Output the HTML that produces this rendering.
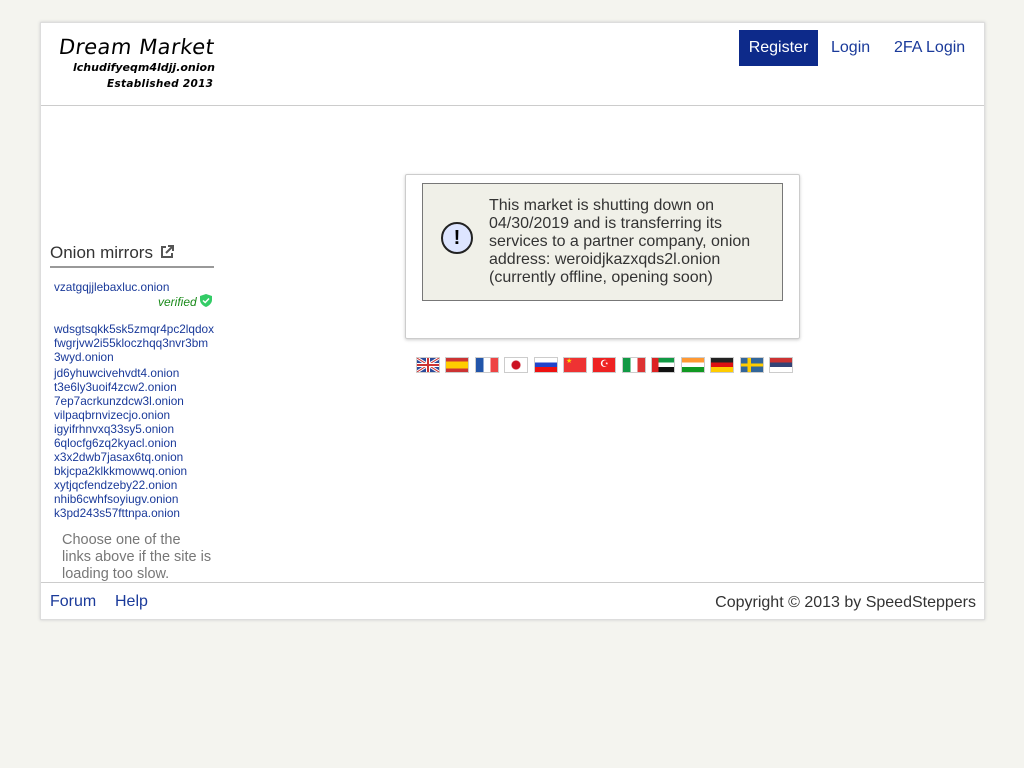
<!DOCTYPE html>
<html><head><meta charset="utf-8"><style>
*{margin:0;padding:0;box-sizing:border-box}
body{width:1024px;height:768px;background:#f4f4ef;font-family:"Liberation Sans",sans-serif;position:relative;overflow:hidden}
.c{position:absolute;left:40px;top:22px;width:945px;height:598px;background:#fff;border:1px solid #ddd;box-shadow:0 0 3px #ccc}
.a{position:absolute;color:#1a3a9a;text-decoration:none}
.logo{position:absolute;font-family:"DejaVu Sans",sans-serif;font-style:italic;color:#000;white-space:nowrap}
.m{position:absolute;left:13px;font-size:11.8px;color:#1a3a9a;line-height:14px;white-space:nowrap}
.f{position:absolute;top:357px;width:24px;height:16px;border:1px solid #ccc}
</style></head><body>
<div class="c">
<div class="logo" style="left:18px;top:12px;font-size:21px;font-style:normal;letter-spacing:.5px;transform:skewX(-8deg)">Dream Market</div>
<div class="logo" style="left:32px;top:38px;font-size:11px;font-weight:bold">lchudifyeqm4ldjj.onion</div>
<div class="logo" style="left:66px;top:55px;font-size:10.5px;font-weight:bold;letter-spacing:.3px">Established 2013</div>
<div style="position:absolute;left:698px;top:7px;width:79px;height:36px;background:#0d2a8a;color:#fff;font-size:16px;line-height:36px;text-align:center">Register</div>
<div class="a" style="left:790px;top:16px;font-size:16px">Login</div>
<div class="a" style="left:853px;top:16px;font-size:16px">2FA Login</div>
<div style="position:absolute;left:0;top:82px;width:943px;border-top:1px solid #ccc"></div>
<div style="position:absolute;left:9px;top:220px;font-size:17px;color:#333">Onion mirrors <svg width="14" height="14" viewBox="0 0 14 14" style="vertical-align:-1px;margin-left:2px"><path d="M6 2H2V12H12V8" fill="none" stroke="#555" stroke-width="2"/><path d="M8 1H13V6M13 1L6 8" fill="none" stroke="#555" stroke-width="2"/></svg></div>
<div style="position:absolute;left:9px;top:243px;width:164px;border-top:2px solid #999"></div>
<div class="m" style="top:257px">vzatgqjjlebaxluc.onion</div>
<div style="position:absolute;left:117px;top:271px;font-size:12px;color:#1a8a1a;font-style:italic">verified <svg width="12" height="13" viewBox="0 0 12 13" style="vertical-align:-1px"><path d="M6 0L12 2V6C12 9 9 12 6 13C3 12 0 9 0 6V2Z" fill="#3c6"/><path d="M3 6.5L5.2 8.5L9 4.5" fill="none" stroke="#fff" stroke-width="1.5"/></svg></div>
<div class="m" style="top:299px">wdsgtsqkk5sk5zmqr4pc2lqdox<br>fwgrjvw2i55kloczhqq3nvr3bm<br>3wyd.onion<br><div style="height:2px"></div>jd6yhuwcivehvdt4.onion<br>t3e6ly3uoif4zcw2.onion<br>7ep7acrkunzdcw3l.onion<br>vilpaqbrnvizecjo.onion<br>igyifrhnvxq33sy5.onion<br>6qlocfg6zq2kyacl.onion<br>x3x2dwb7jasax6tq.onion<br>bkjcpa2klkkmowwq.onion<br>xytjqcfendzeby22.onion<br>nhib6cwhfsoyiugv.onion<br>k3pd243s57fttnpa.onion</div>
<div style="position:absolute;left:21px;top:509px;width:150px;font-size:14.5px;color:#777;line-height:17px">Choose one of the links above if the site is loading too slow.</div>
<div style="position:absolute;left:364px;top:151px;width:395px;height:165px;border:1px solid #ccc;border-radius:2px;box-shadow:0 1px 3px #ccc"></div>
<div style="position:absolute;left:381px;top:160px;width:361px;height:118px;background:#f0f0e8;border:1px solid #777"></div>
<div style="position:absolute;left:400px;top:199px;width:32px;height:32px;border:2px solid #222;border-radius:50%;background:#dde5ff;text-align:center;font-weight:bold;font-size:20px;line-height:28px">!</div>
<div style="position:absolute;left:448px;top:174px;width:290px;font-size:16px;color:#333;line-height:18px">This market is shutting down on 04/30/2019 and is transferring its services to a partner company, onion address: weroidjkazxqds2l.onion (currently offline, opening soon)</div>
<div style="position:absolute;left:0;top:559px;width:943px;border-top:1px solid #ccc"></div>
<div class="a" style="left:9px;top:570px;font-size:16px">Forum</div>
<div class="a" style="left:74px;top:570px;font-size:16px">Help</div>
<div style="position:absolute;right:8px;top:571px;font-size:16px;color:#333">Copyright © 2013 by SpeedSteppers</div>
</div>
<div class="f" style="left:416px;background:#2b4a9a"><svg width="22" height="14"><path d="M0 0L22 14M22 0L0 14" stroke="#fff" stroke-width="3"/><path d="M0 0L22 14M22 0L0 14" stroke="#c33" stroke-width="1"/><path d="M11 0V14M0 7H22" stroke="#fff" stroke-width="4"/><path d="M11 0V14M0 7H22" stroke="#c33" stroke-width="2"/></svg></div>
<div class="f" style="left:445px;background:linear-gradient(#c33 25%,#fc0 25% 75%,#c33 75%)"></div>
<div class="f" style="left:475px;background:linear-gradient(90deg,#25a 33%,#fff 33% 66%,#e44 66%)"></div>
<div class="f" style="left:504px;background:radial-gradient(circle,#c12 4px,#fff 5px)"></div>
<div class="f" style="left:534px;background:linear-gradient(#fff 33%,#24c 33% 66%,#e11 66%)"></div>
<div class="f" style="left:563px;background:#e33"><span style="position:absolute;left:2px;top:-1px;color:#fd0;font-size:7px">★</span></div>
<div class="f" style="left:592px;background:#e22"><span style="position:absolute;left:7px;top:0;color:#fff;font-size:10px;line-height:14px">☪</span></div>
<div class="f" style="left:622px;background:linear-gradient(90deg,#194 33%,#fff 33% 66%,#d33 66%)"></div>
<div class="f" style="left:651px;background:linear-gradient(90deg,#d22 30%,transparent 30%),linear-gradient(#194 33%,#fff 33% 66%,#111 66%)"></div>
<div class="f" style="left:681px;background:linear-gradient(#f93 33%,#fff 33% 66%,#192 66%)"></div>
<div class="f" style="left:710px;background:linear-gradient(#222 33%,#d11 33% 66%,#fc0 66%)"></div>
<div class="f" style="left:740px;background:linear-gradient(90deg,transparent 30%,#fc0 30% 45%,transparent 45%),linear-gradient(#369 40%,#fc0 40% 60%,#369 60%)"></div>
<div class="f" style="left:769px;background:linear-gradient(#c33 33%,#347 33% 66%,#fff 66%)"></div>
</body></html>
